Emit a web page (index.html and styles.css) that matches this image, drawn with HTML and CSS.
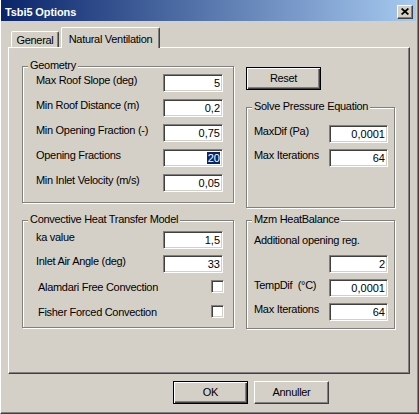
FILE: index.html
```html
<!DOCTYPE html>
<html>
<head>
<meta charset="utf-8">
<title>Tsbi5 Options</title>
<link rel="stylesheet" href="styles.css">
</head>
<body>
<div class="window">
  <div class="titlebar">
    <span class="title">Tsbi5 Options</span>
    <div class="close">
      <svg width="8" height="7" viewBox="0 0 8 7"><path d="M0.6 0.5 L7.4 6.5 M7.4 0.5 L0.6 6.5" stroke="#000" stroke-width="1.7" fill="none"/></svg>
    </div>
  </div>
  <div class="body">
    <div class="tabs">
      <div class="tab tab-general">General</div>
      <div class="tab tab-active">Natural Ventilation</div>
    </div>
    <div class="panel">
      <div class="col col-left">
        <div class="group geometry">
          <span class="legend">Geometry</span>
          <div class="row"><span class="lbl">Max Roof Slope (deg)</span><div class="field">5</div></div>
          <div class="row"><span class="lbl">Min Roof Distance (m)</span><div class="field">0,2</div></div>
          <div class="row"><span class="lbl">Min Opening Fraction (-)</span><div class="field">0,75</div></div>
          <div class="row"><span class="lbl">Opening Fractions</span><div class="field"><span class="sel">20</span></div></div>
          <div class="row"><span class="lbl">Min Inlet Velocity (m/s)</span><div class="field">0,05</div></div>
        </div>
        <div class="group convective">
          <span class="legend">Convective Heat Transfer Model</span>
          <div class="row"><span class="lbl">ka value</span><div class="field">1,5</div></div>
          <div class="row"><span class="lbl">Inlet Air Angle (deg)</span><div class="field">33</div></div>
          <div class="checkrow first"><span class="clbl">Alamdari Free Convection</span><div class="check"></div></div>
          <div class="checkrow second"><span class="clbl">Fisher Forced Convection</span><div class="check"></div></div>
        </div>
      </div>
      <div class="col col-right">
        <div class="btn default reset">Reset</div>
        <div class="group solve">
          <span class="legend">Solve Pressure Equation</span>
          <div class="row"><span class="lbl">MaxDif (Pa)</span><div class="field sfield">0,0001</div></div>
          <div class="row"><span class="lbl">Max Iterations</span><div class="field sfield">64</div></div>
        </div>
        <div class="group mzm">
          <span class="legend">Mzm HeatBalance</span>
          <div class="plain">Additional opening reg.</div>
          <div class="row row-end"><div class="field sfield">2</div></div>
          <div class="row"><span class="lbl">TempDif&nbsp;&nbsp;(°C)</span><div class="field sfield">0,0001</div></div>
          <div class="row"><span class="lbl">Max Iterations</span><div class="field sfield">64</div></div>
        </div>
      </div>
    </div>
    <div class="buttons">
      <div class="btn default">OK</div>
      <div class="btn">Annuller</div>
    </div>
  </div>
</div>
</body>
</html>
```
FILE: styles.css
```css
* { box-sizing: border-box; }
html, body { margin: 0; padding: 0; }
body {
  background: #D4D0C8;
  font-family: "Liberation Sans", Arial, sans-serif;
  font-size: 11px;
  line-height: 13px;
  letter-spacing: -0.3px;
  color: #000;
}
.window {
  width: 419px;
  height: 414px;
  background: #D4D0C8;
  border-left: 1px solid #fff;
  border-right: 1px solid #404040;
  border-bottom: 1px solid #404040;
  box-shadow: inset -1px -1px 0 #808080;
  padding: 0 2px 2px 0;
  display: flex;
  flex-direction: column;
}
.titlebar {
  height: 21px;
  flex: none;
  background: linear-gradient(to right, #0A246A, #A6CAF0);
  display: flex;
  align-items: flex-start;
  justify-content: space-between;
  padding: 0 3px 0 4px;
}
.title {
  color: #fff;
  font-weight: bold;
  letter-spacing: -0.1px;
  margin-top: 6px;
}
.close {
  margin-top: 5px;
  width: 16px;
  height: 14px;
  background: #D4D0C8;
  border: 1px solid;
  border-color: #fff #404040 #404040 #fff;
  box-shadow: inset -1px -1px 0 #808080;
  display: flex;
  align-items: center;
  justify-content: center;
  padding: 0 1px 1px 0;
}
.close svg { display: block; }
.body {
  flex: 1;
  padding: 6px 6px 0 7px;
  display: flex;
  flex-direction: column;
}
.tabs {
  height: 20px;
  display: flex;
  align-items: flex-end;
  padding-left: 3px;
}
.tab {
  background: #D4D0C8;
  border-top: 1px solid #fff;
  border-left: 1px solid #fff;
  border-right: 1px solid #404040;
  box-shadow: inset -1px 0 0 #808080;
  border-top-left-radius: 2px;
  border-top-right-radius: 2px;
  text-align: center;
  white-space: nowrap;
}
.tab-general {
  width: 48px;
  height: 16px;
  padding-top: 2px;
}
.tab-active {
  width: 99px;
  height: 21px;
  margin-left: 2px;
  margin-bottom: -1px;
  padding-top: 5px;
  position: relative;
  z-index: 1;
}
.panel {
  height: 327px;
  flex: none;
  border-top: 1px solid #fff;
  border-left: 1px solid #fff;
  border-right: 1px solid #404040;
  border-bottom: 1px solid #404040;
  box-shadow: inset -1px -1px 0 #808080;
  padding: 18px 0 0 13px;
  display: flex;
  gap: 12px;
}
.col { display: flex; flex-direction: column; }
.col-left { width: 212px; }
.col-right { width: 149px; }

.group {
  position: relative;
  border: 1px solid #808080;
  box-shadow: 1px 1px 0 #fff, inset 1px 1px 0 #fff;
  display: flex;
  flex-direction: column;
}
.legend {
  position: absolute;
  top: -8px;
  left: 5px;
  padding: 0 2px;
  background: #D4D0C8;
  white-space: nowrap;
}
.row {
  height: 18px;
  display: flex;
  align-items: center;
  justify-content: space-between;
  flex: none;
}
.row-end { justify-content: flex-end; }
.lbl {
  white-space: nowrap;
  margin-bottom: 6px;
}
.field {
  width: 60px;
  height: 18px;
  background: #fff;
  border: 1px solid;
  border-color: #808080 #fff #fff #808080;
  box-shadow: inset 1px 1px 0 #404040, inset -1px -1px 0 #D4D0C8;
  text-align: right;
  padding: 1px 2px 0 0;
  line-height: 14px;
  white-space: nowrap;
  letter-spacing: 0;
}
.sfield { width: 59px; }
.sel {
  background: #0A246A;
  color: #fff;
  padding: 0 0 0 1px;
}

.geometry {
  height: 137px;
  padding: 7px 10px 0 13px;
  gap: 7px;
}
.convective {
  height: 108px;
  margin-top: 17px;
  padding: 10px 10px 0 13px;
  gap: 6px;
}
.checkrow {
  height: 13px;
  display: flex;
  align-items: center;
  justify-content: space-between;
  padding-left: 2px;
  margin-right: -1px;
  flex: none;
}
.checkrow.first { margin-top: 1px; }
.checkrow.second { margin-top: 6px; }
.clbl { white-space: nowrap; margin-top: 2px; }
.check {
  width: 13px;
  height: 13px;
  background: #fff;
  border: 1px solid;
  border-color: #808080 #fff #fff #808080;
  box-shadow: inset 1px 1px 0 #404040, inset -1px -1px 0 #D4D0C8;
}

.btn {
  width: 75px;
  height: 23px;
  background: #D4D0C8;
  border: 1px solid;
  border-color: #fff #404040 #404040 #fff;
  box-shadow: inset -1px -1px 0 #808080;
  display: flex;
  align-items: center;
  justify-content: center;
  padding-bottom: 1px;
  flex: none;
}
.btn.default {
  border: 1px solid #000;
  box-shadow: inset 1px 1px 0 #fff, inset -1px -1px 0 #404040, inset -2px -2px 0 #808080;
}
.reset { margin-top: 1px; }
.solve {
  height: 101px;
  margin-top: 17px;
  padding: 17px 6px 0 7px;
  gap: 6px;
}
.mzm {
  height: 109px;
  margin-top: 12px;
  padding: 13px 6px 0 7px;
  gap: 6px;
}
.plain { white-space: nowrap; margin-bottom: 2px; }
.buttons {
  display: flex;
  gap: 6px;
  justify-content: flex-end;
  padding-right: 81px;
  margin-top: 7px;
}
```
